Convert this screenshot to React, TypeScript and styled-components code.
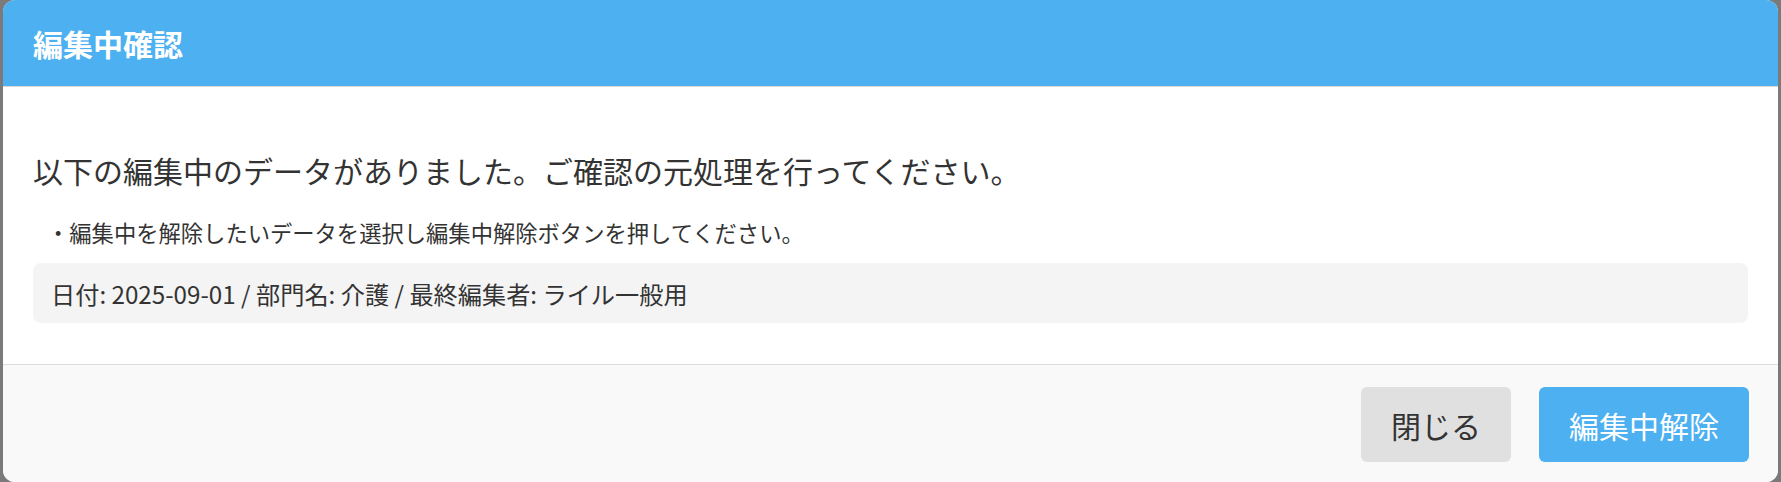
import React from "react";
import styled, { createGlobalStyle } from "styled-components";

const Global = createGlobalStyle`
  html, body, #root {
    margin: 0;
    height: 100%;
  }
  body {
    font-family: "Noto Sans CJK JP", "Noto Sans", sans-serif;
    background: #7a7a7a;
    color: #333;
  }
`;

// Basic
const Backdrop = styled.div`
  height: 100%;
  padding: 0 3px;
  box-sizing: border-box;
  display: flex;
`;
const Dialog = styled.div`
  flex: 1;
  display: flex;
  flex-direction: column;
  background: #fff;
  border-radius: 12px;
  overflow: hidden;
`;
const Header = styled.div`
  height: 86px;
  flex-shrink: 0;
  display: flex;
  align-items: center;
  padding: 0 30px;
  background: #4cb0f1;
  border-bottom: 1px solid #d8d8d8;
`;
const Title = styled.h2`
  margin: 0;
  font-size: 30px;
  font-weight: 700;
  color: #fff;
  line-height: 1;
`;
const Body = styled.div`
  flex: 1;
  padding: 61px 30px 0;
`;
const Lead = styled.p`
  margin: 0;
  font-size: 30px;
  line-height: 45px;
`;
const Note = styled.p`
  margin: 22px 0 13px;
  padding-left: 14px;
  font-size: 22.3px;
  line-height: 35px;
`;
const InfoBox = styled.div`
  height: 60px;
  display: flex;
  align-items: center;
  padding: 0 18px;
  background: #f4f4f4;
  border-radius: 8px;
  font-size: 24.2px;
`;
const Footer = styled.div`
  flex-shrink: 0;
  display: flex;
  justify-content: flex-end;
  gap: 28px;
  padding: 22px 29px 20px;
  background: #f9f9f9;
  border-top: 1px solid #dcdcdc;
`;
const Button = styled.button<{ "data-primary"?: boolean }>`
  height: 75px;
  padding: 0 30px;
  border: none;
  border-radius: 6px;
  font-family: inherit;
  font-size: 30px;
  cursor: pointer;
  background: ${(props) => (props["data-primary"] ? "#4cb0f1" : "#e0e0e0")};
  color: ${(props) => (props["data-primary"] ? "#fff" : "#333")};
`;

const App = () => {
  return (
    <>
      <Global />
      <Backdrop>
        <Dialog>
          <Header>
            <Title>編集中確認</Title>
          </Header>
          <Body>
            <Lead>以下の編集中のデータがありました。ご確認の元処理を行ってください。</Lead>
            <Note>・編集中を解除したいデータを選択し編集中解除ボタンを押してください。</Note>
            <InfoBox>日付: 2025-09-01 / 部門名: 介護 / 最終編集者: ライル一般用</InfoBox>
          </Body>
          <Footer>
            <Button>閉じる</Button>
            <Button data-primary>編集中解除</Button>
          </Footer>
        </Dialog>
      </Backdrop>
    </>
  );
};

export default App;
